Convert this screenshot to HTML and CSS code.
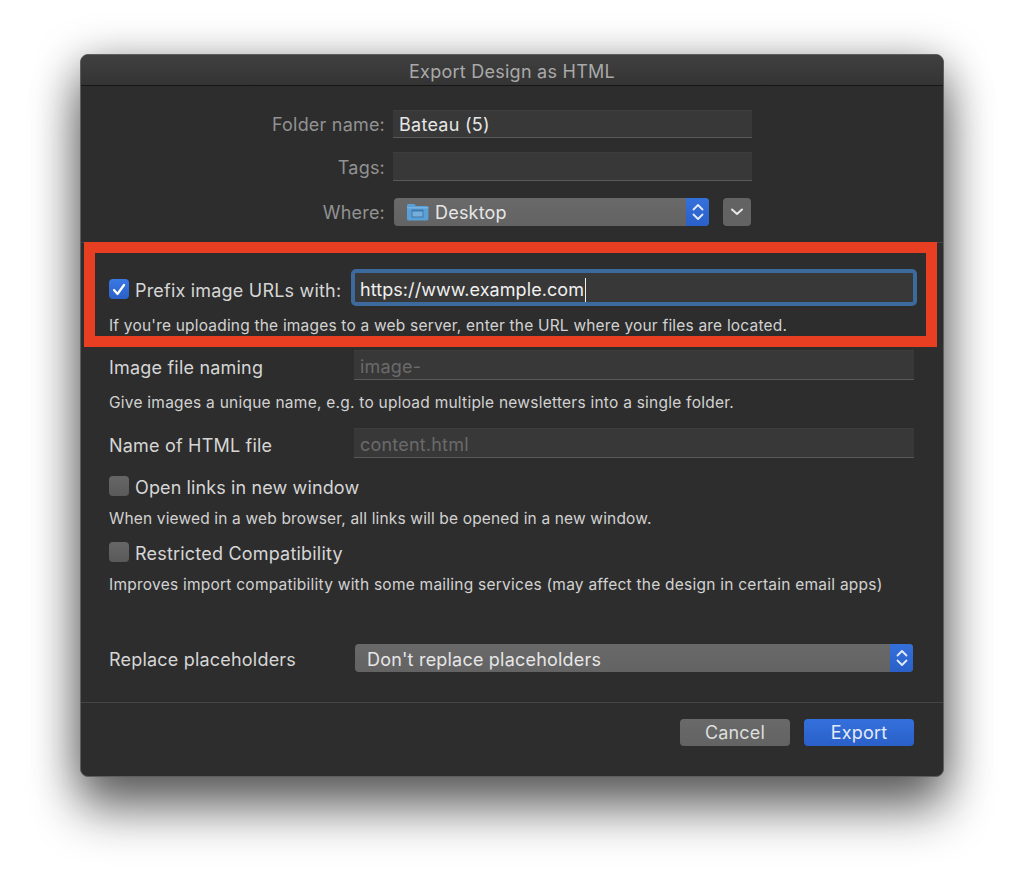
FILE: index.html
```html
<!DOCTYPE html>
<html lang="en">
<head>
<meta charset="utf-8">
<title>Export Design as HTML</title>
<link rel="stylesheet" href="styles.css">
</head>
<body>
<div class="window">
  <div class="titlebar">Export Design as HTML</div>
  <div class="top-form">
    <div class="top-row"><span class="top-label">Folder name:</span><div class="field value top-field">Bateau (5)</div></div>
    <div class="top-row tags-row"><span class="top-label">Tags:</span><div class="field top-field tags-field"></div></div>
    <div class="top-row where-row"><span class="top-label">Where:</span>
      <div class="popup where-popup">
        <svg class="folder" width="23" height="18" viewBox="0 0 23 18"><path d="M1 16V2.500C1 1.600 1.600 1 2.500 1h5.200c.6 0 1 .3 1.400.8L10 3h11c.8 0 1.400.6 1.400 1.400V16c0 .9-.6 1.400-1.400 1.400H2.400C1.600 17.400 1 16.800 1 16z" fill="#5a9fd6"/><path d="M1 4h21.400v1.500H1z" fill="#74b2e2"/><rect x="5.500" y="6.500" width="12" height="8" fill="#3f78ad"/><rect x="6.500" y="8.500" width="10" height="5" fill="#76aedb"/></svg>
        <span class="popup-text">Desktop</span>
        <span class="stepper"><svg width="14" height="20" viewBox="0 0 14 20"><path d="M2.500 7.500L7 3l4.500 4.500M2.500 12.500L7 17l4.500-4.500" fill="none" stroke="#e4ebf8" stroke-width="1.800" stroke-linecap="round" stroke-linejoin="round"/></svg></span>
      </div>
      <div class="square-btn"><svg width="14" height="10" viewBox="0 0 14 10"><path d="M2 2.500L7 7l5-4.500" fill="none" stroke="#e6e6e6" stroke-width="2" stroke-linecap="round" stroke-linejoin="round"/></svg></div>
    </div>
  </div>
  <div class="options">
    <div class="prefix-row">
      <span class="check checked"><svg width="14" height="13" viewBox="0 0 14 13"><path d="M2 7l3.500 4L12 2" fill="none" stroke="#fff" stroke-width="2.200" stroke-linecap="round" stroke-linejoin="round"/></svg></span>
      <span class="label">Prefix image URLs with:</span>
      <div class="field focused"><span>https://www.example.com</span><i class="caret"></i></div>
    </div>
    <p class="desc prefix-desc">If you're uploading the images to a web server, enter the URL where your files are located.</p>
    <div class="field-row image-row"><span class="label row-label">Image file naming</span><div class="field placeholder">image-</div></div>
    <p class="desc image-desc">Give images a unique name, e.g. to upload multiple newsletters into a single folder.</p>
    <div class="field-row html-row"><span class="label row-label">Name of HTML file</span><div class="field placeholder">content.html</div></div>
    <div class="check-row open-row"><span class="check"></span><span class="label open-label">Open links in new window</span></div>
    <p class="desc check-desc window-desc">When viewed in a web browser, all links will be opened in a new window.</p>
    <div class="check-row restricted-row"><span class="check"></span><span class="label">Restricted Compatibility</span></div>
    <p class="desc check-desc">Improves import compatibility with some mailing services (may affect the design in certain email apps)</p>
    <div class="field-row replace-row"><span class="label">Replace placeholders</span>
      <div class="popup replace-popup"><span class="popup-text">Don't replace placeholders</span>
        <span class="stepper"><svg width="14" height="20" viewBox="0 0 14 20"><path d="M2.500 7.500L7 3l4.500 4.500M2.500 12.500L7 17l4.500-4.500" fill="none" stroke="#e4ebf8" stroke-width="1.800" stroke-linecap="round" stroke-linejoin="round"/></svg></span>
      </div>
    </div>
  </div>
  <div class="footer">
    <button class="btn">Cancel</button>
    <button class="btn primary">Export</button>
  </div>
  <div class="annotation"></div>
</div>
</body>
</html>
```
FILE: styles.css
```css
* { box-sizing: border-box; }
html, body { margin: 0; height: 883px; overflow: hidden; background: #fff; }
body { padding: 54px 80px 0; font-family: Inter, "Liberation Sans", sans-serif; }
.window {
  position: relative;
  width: 864px;
  height: 723px;
  background: #2d2d2d;
  border: 1px solid #5e5e5e;
  border-radius: 8px;
  box-shadow: 0 34px 50px rgba(0,0,0,.48), 0 8px 45px rgba(0,0,0,.4);
}
.titlebar {
  height: 31px;
  border-radius: 7px 7px 0 0;
  border-bottom: 1px solid #161616;
  background: linear-gradient(#404040, #343434);
  color: #a9a9a9;
  font-size: 18px;
  letter-spacing: .25px;
  line-height: 33px;
  text-align: center;
}
.top-form {
  height: 157px;
  padding-top: 24px;
  border-bottom: 1px solid #454545;
}
.top-row { display: flex; align-items: center; height: 28px; }
.tags-row { height: 29px; margin-top: 14px; }
.tags-row .top-label { padding-top: 2px; }
.where-row { margin-top: 17px; }
.top-label {
  width: 304px;
  margin-right: 8px;
  text-align: right;
  color: #929292;
  font-size: 18px;
  letter-spacing: .2px;
}
.field {
  display: flex;
  align-items: center;
  background: #383838;
  border-top: 1px solid #3d3d3d;
  border-bottom: 1px solid #595959;
  color: #e8e8e8;
  font-size: 18px;
  letter-spacing: .2px;
  padding-left: 5px;
}
.top-field { width: 359px; height: 100%; }
.value { color: #e6e6e6; padding-left: 6px; letter-spacing: .27px; }
.popup {
  display: flex;
  align-items: center;
  height: 28px;
  border-radius: 4px;
  background: linear-gradient(#696969, #636363);
  color: #e6e6e6;
  font-size: 18px;
  letter-spacing: .2px;
  overflow: hidden;
}
.where-popup { width: 315px; margin-left: 1px; padding-left: 12px; }
.folder { margin-right: 6px; }
.popup-text { flex: 1; }
.stepper {
  display: flex;
  align-items: center;
  justify-content: center;
  width: 23px;
  height: 100%;
  background: linear-gradient(#3470dc, #2a60c8);
}
.square-btn {
  display: flex;
  align-items: center;
  justify-content: center;
  width: 28px;
  height: 28px;
  margin-left: 14px;
  border-radius: 4px;
  background: #636363;
}
.options { height: 460px; padding: 30px 29px 0 28px; border-bottom: 1px solid #454545; }
.label { color: #d6d6d6; font-size: 18px; letter-spacing: .2px; white-space: nowrap; }
.open-label { letter-spacing: .12px; }
.prefix-row { display: flex; align-items: center; height: 29px; }
.prefix-row .check { margin-top: 3px; }
.prefix-row .label { margin-top: 5px; }
.check {
  display: flex;
  align-items: center;
  justify-content: center;
  flex: none;
  width: 20px;
  height: 20px;
  margin-right: 6px;
  margin-bottom: 2px;
  border-radius: 4px;
  background: linear-gradient(#666, #5a5a5a);
}
.checked { background: linear-gradient(#3a78e4, #2a60c8); margin-bottom: 0; }
.focused {
  width: 558px;
  height: 29px;
  margin-left: auto;
  margin-right: 1px;
  padding-top: 4px;
  letter-spacing: .07px;
  outline: 4px solid #3c6a9c;
  border-radius: 1px;
  border: 0;
  background: #383838;
  color: #f0f0f0;
}
.caret { display: block; width: 1px; height: 24px; background: #f0f0f0; margin-left: 1px; }
.desc { margin: 0; height: 20px; line-height: 22px; color: #d2d2d2; font-size: 15.500px; letter-spacing: .24px; white-space: nowrap; }
.prefix-desc { margin-top: 13px; letter-spacing: .195px; }
.window-desc { letter-spacing: .155px; }
.field-row { display: flex; align-items: center; }
.field-row .field { flex: 1; height: 100%; }
.row-label { width: 245px; padding-top: 4px; }
.image-row { height: 30px; margin-top: 15px; }
.image-desc { margin-top: 12px; }
.html-row { height: 30px; margin-top: 16px; }
.placeholder { color: #6a6a6a; padding-top: 3px; padding-left: 6px; }
.check-row { display: flex; align-items: center; height: 20px; }
.open-row { margin-top: 19px; }
.restricted-row { margin-top: 15px; }
.check-desc { margin-top: 11px; }
.replace-row { height: 28px; margin-top: 50px; }
.replace-row .label { width: 246px; margin-top: 2px; }
.replace-popup { width: 558px; padding-left: 12px; }
.replace-popup .popup-text { padding-top: 2px; }
.footer { display: flex; justify-content: flex-end; gap: 14px; padding: 16px 29px 0 0; }
.btn {
  width: 110px;
  height: 27px;
  padding: 0;
  border: 0;
  border-radius: 4px;
  background: linear-gradient(#696969, #636363);
  color: #dedede;
  font: inherit;
  font-size: 18px;
  letter-spacing: .2px;
}
.primary { background: linear-gradient(#3470dc, #2a60c8); color: #e4ebf8; }
.annotation {
  position: absolute;
  left: 3px;
  top: 187px;
  width: 853px;
  height: 105px;
  border: 11px solid #e83f22;
  pointer-events: none;
}
```
